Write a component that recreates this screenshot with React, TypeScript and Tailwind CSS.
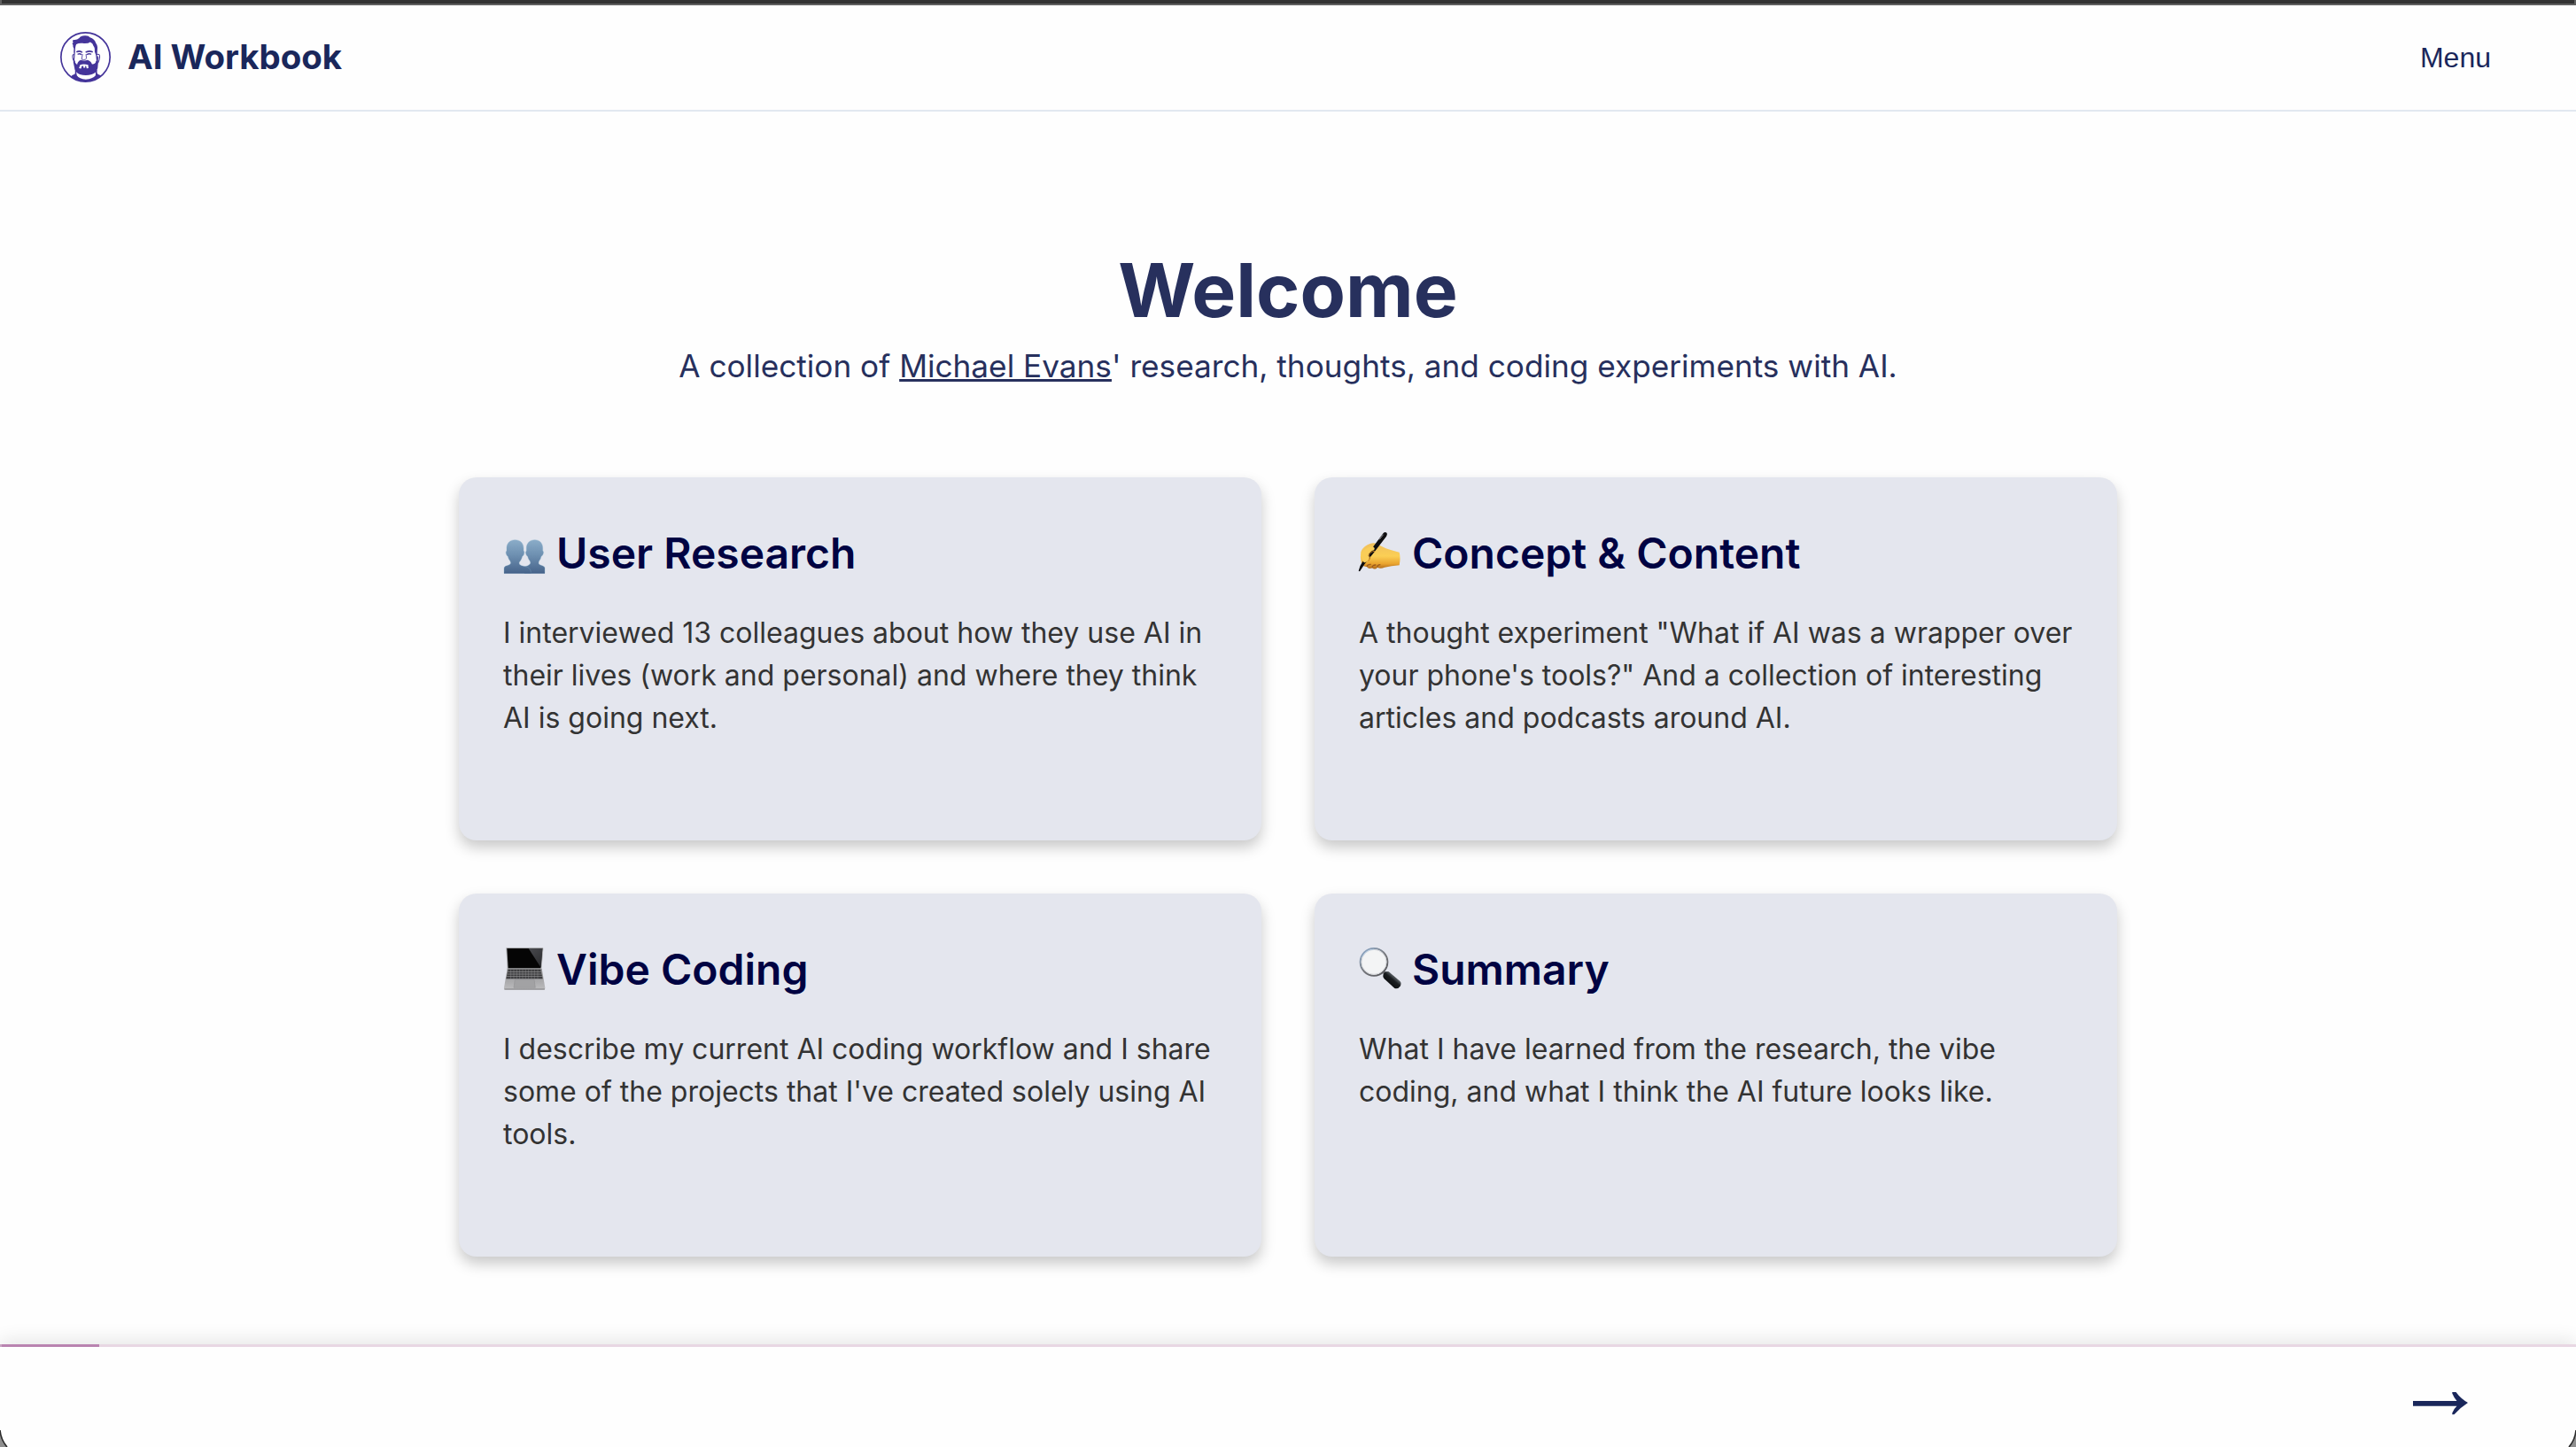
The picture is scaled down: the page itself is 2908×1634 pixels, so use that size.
import type { ReactNode } from "react";

function Avatar() {
  return (
    <svg viewBox="0 0 170 170" className="-mt-[2px] size-[57px] shrink-0" aria-hidden="true">
      <defs>
        <clipPath id="badge">
          <circle cx="85" cy="85" r="83" />
        </clipPath>
      </defs>
      <g fill="#44349a" clipPath="url(#badge)">
        <path d="M30 158L40 146Q50 143 54 137L56 147Q64 159 86 160Q109 159 119 147L121 137Q127 144 137 147L144 158L120 172H52Z" />
        <path d="M43 44Q38 38 44 36Q38 28 47 27Q56 28 64 21Q69 13 82 13Q96 12 100 19Q116 24 120 38Q127 46 125 60L124 80L128 100L126 122Q121 139 106 143Q86 149 66 143Q53 138 49 126L44 102L46 74Q45 64 46 56Q42 50 43 44Z" />
        <path d="M119 128H124V154H119ZM50 120H54V150H50Z" />
      </g>
      <path
        fill="#fff"
        d="M54 42Q62 37 75 38Q93 40 101 34Q110 38 112 48Q117 52 116 66L120 78L122 96Q118 110 107 109Q103 98 92 95Q81 99 69 95Q59 99 57 110Q49 106 48 94L50 68Q50 50 54 42Z"
      />
      <g fill="none" stroke="#44349a" strokeLinecap="round" strokeLinejoin="round">
        <path strokeWidth="4.5" d="M56 67Q64 63 73 68M87 68Q98 63 108 67" />
        <path strokeWidth="4" d="M60 75Q66 72 71 76M90 76Q97 72 103 75" />
        <path strokeWidth="2.5" d="M75 76L72 92Q79 97 87 92M87 76L88 88" />
        <path strokeWidth="3" d="M46 76Q40 76 42 88Q44 99 49 99M124 76Q133 73 133 84Q131 98 128 103Q124 106 121 101M127 83Q129 87 125 94" />
      </g>
      <path fill="#fff" d="M67 111Q79 106 94 111L95 122L89 123L87 115H84V121H78V115H73L70 124L63 122Z" />
      <circle cx="85" cy="85" r="82.5" fill="none" stroke="#44349a" strokeWidth="5" />
    </svg>
  );
}

function PeopleIcon() {
  return (
    <svg viewBox="0 0 192 192" className="size-[64px]" aria-hidden="true">
      <defs>
        <linearGradient id="bust" x1="0" y1="58" x2="0" y2="173" gradientUnits="userSpaceOnUse">
          <stop offset="0" stopColor="#8badc9" />
          <stop offset="0.45" stopColor="#6e90b1" />
          <stop offset="1" stopColor="#46638a" />
        </linearGradient>
      </defs>
      <g fill="url(#bust)" stroke="#7fa9c4" strokeWidth="1">
        <path d="M131 59C114 59 103 70 103 87V96Q99 98 101 106Q103 113 107 115Q109 125 115 131Q118 137 115 141Q110 147 96 150V172H165V154Q165 149 158 147L148 143Q142 140 145 132Q151 125 153 115Q158 113 160 105Q162 98 158 96V87C158 70 148 59 131 59Z" />
        <path d="M64 59C47 59 36 70 36 87V96Q32 98 34 106Q36 113 40 115Q42 125 48 131Q52 138 47 142Q43 145 32 148Q27 150 27 156V172H118Q119 158 106 151L86 146Q78 143 78 138Q78 133 83 129Q87 122 89 115Q94 112 95 105Q97 98 93 96V87C93 70 82 59 64 59Z" />
      </g>
      <path d="M27 171H165" stroke="#3f5c84" strokeWidth="3" />
    </svg>
  );
}

function WritingIcon() {
  return (
    <svg viewBox="7 0 192 192" className="size-[64px]" aria-hidden="true">
      <defs>
        <linearGradient id="skin" x1="0" y1="70" x2="0" y2="158" gradientUnits="userSpaceOnUse">
          <stop offset="0" stopColor="#f0c05c" />
          <stop offset="0.5" stopColor="#fbcf55" />
          <stop offset="0.8" stopColor="#e9a32e" />
          <stop offset="1" stopColor="#a9641a" />
        </linearGradient>
      </defs>
      <path
        d="M38 100Q42 86 60 76Q74 68 84 70Q96 74 110 82Q134 94 168 101Q173 120 168 145Q140 148 118 152Q104 158 94 152Q86 162 76 154Q64 160 58 150Q44 150 40 138Q34 118 38 100Z"
        fill="url(#skin)"
      />
      <path d="M58 150Q60 141 72 142M76 154Q76 143 89 144M94 152Q92 143 104 143" fill="none" stroke="#9c5a1c" strokeWidth="4" />
      <path d="M114 36Q120 30 126 36Q128 41 124 47L79 106L51 140L34 166L30 164Q34 146 42 136L64 103Z" fill="#0e0e10" />
      <path d="M113 42L101 57" stroke="#8f8f93" strokeWidth="3" strokeLinecap="round" />
      <path d="M40 106Q52 84 78 82Q88 86 82 94Q68 98 63 112Q70 118 66 124Q56 138 48 135Q38 128 40 106Z" fill="#f9cd58" />
      <path d="M84 97Q69 98 64 112Q74 118 64 129" fill="none" stroke="#b87522" strokeWidth="3" strokeLinecap="round" />
    </svg>
  );
}

function LaptopIcon() {
  return (
    <svg viewBox="0 0 192 192" className="size-[64px]" aria-hidden="true">
      <defs>
        <linearGradient id="glare" x1="110" y1="30" x2="160" y2="90" gradientUnits="userSpaceOnUse">
          <stop offset="0" stopColor="#4a4b4f" />
          <stop offset="1" stopColor="#2a2b2e" />
        </linearGradient>
        <linearGradient id="deck" x1="0" y1="100" x2="0" y2="172" gradientUnits="userSpaceOnUse">
          <stop offset="0" stopColor="#8d8d8f" />
          <stop offset="1" stopColor="#bcbcbe" />
        </linearGradient>
      </defs>
      <path d="M36 30Q34 30 34 33L38 103H154L160 33Q160 30 157 30Z" fill="#a9aaad" />
      <path d="M37 33L41 100H151L157 33Z" fill="#050505" />
      <path d="M110 33H157L152 98Z" fill="url(#glare)" />
      <path d="M38 102H155L166 166Q167 173 160 173H32Q26 173 27 166Z" fill="url(#deck)" />
      <path d="M41 104H151L158 136H34Z" fill="#3a3a3c" />
      <g stroke="#a0a0a2" strokeWidth="2">
        <path d="M39 112H153M38 120H155M36 128H157" />
        <path d="M50 104V136M60 104V136M70 104V136M80 104V136M90 104V136M100 104V136M110 104V136M120 104V136M130 104V136M141 104V136" opacity="0.55" />
      </g>
      <path d="M64 139H129L133 166H60Z" fill="#a2a2a4" stroke="#8c8c8e" strokeWidth="1.5" />
      <path d="M28 171H165" stroke="#808083" strokeWidth="3" />
    </svg>
  );
}

function MagnifierIcon() {
  return (
    <svg viewBox="7 0 192 192" className="size-[64px]" aria-hidden="true">
      <defs>
        <linearGradient id="rim" x1="45" y1="35" x2="120" y2="125" gradientUnits="userSpaceOnUse">
          <stop offset="0" stopColor="#8ea9c8" />
          <stop offset="0.5" stopColor="#77797e" />
          <stop offset="1" stopColor="#55565a" />
        </linearGradient>
        <linearGradient id="grip" x1="128" y1="150" x2="152" y2="122" gradientUnits="userSpaceOnUse">
          <stop offset="0" stopColor="#0c0e10" />
          <stop offset="0.55" stopColor="#1a1d20" />
          <stop offset="0.8" stopColor="#4e5458" />
          <stop offset="1" stopColor="#15171a" />
        </linearGradient>
      </defs>
      <path d="M112 110L126 122" stroke="#77787c" strokeWidth="10" />
      <circle cx="82" cy="79" r="46" fill="#f3f4f5" stroke="url(#rim)" strokeWidth="6" />
      <circle cx="82" cy="79" r="42" fill="none" stroke="#d6d8dc" strokeWidth="3" />
      <path d="M42 62Q54 38 82 36" fill="none" stroke="#b5d0ec" strokeWidth="2" />
      <path d="M115 118Q121 108 132 112L170 144Q177 151 171 161Q163 172 152 168L117 136Q110 129 115 118Z" fill="url(#grip)" />
    </svg>
  );
}

type CardProps = { icon: ReactNode; title: string; lines: string[] };

const cards: CardProps[] = [
  {
    icon: <PeopleIcon />,
    title: "User Research",
    lines: [
      "I interviewed 13 colleagues about how they use AI in",
      "their lives (work and personal) and where they think",
      "AI is going next.",
    ],
  },
  {
    icon: <WritingIcon />,
    title: "Concept & Content",
    lines: [
      'A thought experiment "What if AI was a wrapper over',
      "your phone's tools?\" And a collection of interesting",
      "articles and podcasts around AI.",
    ],
  },
  {
    icon: <LaptopIcon />,
    title: "Vibe Coding",
    lines: [
      "I describe my current AI coding workflow and I share",
      "some of the projects that I've created solely using AI",
      "tools.",
    ],
  },
  {
    icon: <MagnifierIcon />,
    title: "Summary",
    lines: ["What I have learned from the research, the vibe", "coding, and what I think the AI future looks like."],
  },
];

function Card({ icon, title, lines }: CardProps) {
  return (
    <article className="h-[410px] rounded-[20px] bg-[#e4e6ee] px-[50px] pt-[52px] shadow-[0_8px_16px_rgba(0,0,0,0.21)]">
      <h2 className="flex h-[68px] items-start text-[48px] leading-[68px] font-semibold whitespace-nowrap text-[#000342]">
        <span className="-mt-px mr-[4px] -ml-[8px] shrink-0">{icon}</span>
        {title}
      </h2>
      <p className="mt-[32px] text-[32px] leading-[48px] whitespace-nowrap text-[#333]">
        {lines.map((line) => (
          <span key={line} className="block">
            {line}
          </span>
        ))}
      </p>
    </article>
  );
}

function WindowCorner({ className }: { className: string }) {
  return (
    <svg viewBox="0 0 9 20" className={className} aria-hidden="true">
      <path d="M0 1Q1 12 8 20H0Z" fill="#8f8f8f" />
      <path d="M0 1Q1 12 8 20" fill="none" stroke="#2a2a2a" strokeWidth="1.6" />
    </svg>
  );
}

export default function App() {
  return (
    <div className="relative flex h-[1634px] w-[2908px] flex-col overflow-hidden bg-[#fefefe] font-['Inter',sans-serif]">
      <div className="h-[6px] shrink-0 border-x-2 border-b-2 border-[#606060] bg-[#333]" />
      <header className="flex h-[120px] shrink-0 items-center justify-between border-b-2 border-[#e2e8f0] pr-[96px] pl-[68px] text-[#1a275b]">
        <div className="flex items-center gap-[19px]">
          <Avatar />
          <span className="-mt-[2px] text-[38.4px] leading-[46px] font-bold">AI Workbook</span>
        </div>
        <button type="button" className="font-['Liberation_Sans',Arial,sans-serif] text-[32px] leading-[40px]">
          Menu
        </button>
      </header>

      <main className="flex flex-1 flex-col items-center pt-[152px]">
        <h1 className="text-[84px] leading-[100px] font-bold text-[#27305d]">Welcome</h1>
        <p className="mt-[9px] text-[35.2px] leading-[52px] whitespace-nowrap text-[#27305d]">
          A collection of{" "}
          <a className="underline decoration-[3px] underline-offset-[2px]">Michael Evans</a>
          ' research, thoughts, and coding experiments with AI.
        </p>
        <section className="mt-[100px] grid grid-cols-[906px_906px] gap-[60px]">
          {cards.map((card) => (
            <Card key={card.title} {...card} />
          ))}
        </section>
      </main>

      <footer className="flex h-[116px] shrink-0 flex-col bg-[#fefefe] shadow-[0_-4px_20px_rgba(0,0,0,0.1)]">
        <div className="h-[3px] bg-[#e8d7e3]">
          <div className="h-full w-[112px] border-l-2 border-[#c9a3c2] bg-[#b983b0]" />
        </div>
        <div className="flex flex-1 justify-end pt-[51px] pr-[122px]">
          <svg viewBox="0 0 62 26" className="h-[26px] w-[62px]" fill="#1a275b" aria-label="Next">
            <path d="M0 10H49.500Q46 6 44.300 1.600V0H48.500Q54 7.500 62 12Q54 17 46.500 25.200H44.300V23.500Q46 19 49.500 15.800H0Z" />
          </svg>
        </div>
      </footer>
      <WindowCorner className="absolute bottom-0 left-0 h-[20px] w-[9px]" />
      <WindowCorner className="absolute right-0 bottom-0 h-[20px] w-[9px] -scale-x-100" />
    </div>
  );
}
